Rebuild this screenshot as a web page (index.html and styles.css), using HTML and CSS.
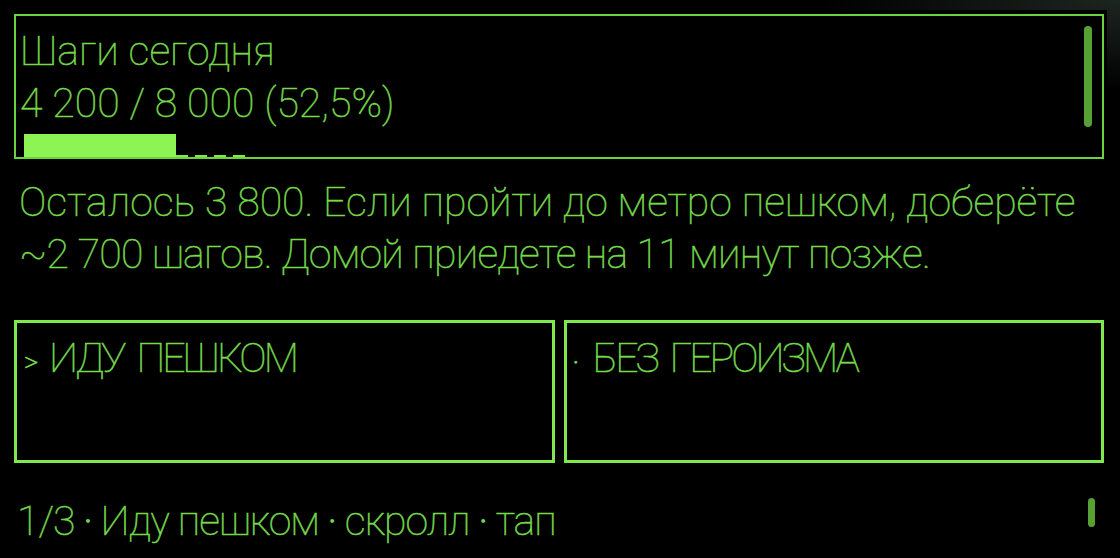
FILE: index.html
```html
<!DOCTYPE html>
<html lang="ru">
<head>
  <meta charset="UTF-8" />
  <meta name="viewport" content="width=device-width, initial-scale=1" />
  <title>Шаги</title>
  <link rel="stylesheet" href="styles.css">
</head>
<body>
  <div class="screen">
    <div class="panel">
      <div class="panel-line">Шаги сегодня</div>
      <div class="panel-line">4 200 / 8 000 (52,5%)</div>
      <div class="bar">
        <div class="bar-fill"></div>
        <div class="bar-track"></div>
      </div>
      <div class="scroll scroll-panel"></div>
    </div>

    <p class="note">Осталось 3 800. Если пройти до метро пешком, доберёте <span class="tight">~2 700 шагов. Домой приедете на 11 минут позже.</span></p>

    <div class="choices">
      <div class="choice"><span class="mark">&gt;</span>ИДУ ПЕШКОМ</div>
      <div class="choice"><span class="mark mark-dot">·</span>БЕЗ ГЕРОИЗМА</div>
    </div>

    <div class="footer">
      <span class="footer-text">1/3 <span class="sep">·</span> Иду пешком <span class="sep">·</span> скролл <span class="sep">·</span> тап</span>
      <div class="scroll scroll-footer"></div>
    </div>
  </div>
</body>
</html>
```
FILE: styles.css
```css
body {
  margin: 0;
  background: radial-gradient(ellipse 300px 90px at 100% 0, #1d2521, #000);
  color: #74d94b;
  font-family: Roboto, "Liberation Sans", sans-serif;
  font-weight: 100;
  font-size: 41px;
  line-height: 52px;
  -webkit-text-stroke: 0.5px #74d94b;
  height: 558px;
  overflow: hidden;
}
.screen {
  background: #000;
  margin: 10px 13px 0 0;
  padding: 4px 3px 0 14px;
  height: 548px;
  box-sizing: border-box;
}

/* top panel with the counter */
.panel {
  position: relative;
  height: 145px;
  box-sizing: border-box;
  border: 2px solid #6ad43c;
  padding: 9px 0 0 4px;
  overflow: hidden;
}
.panel-line {
  white-space: nowrap;
}
.bar {
  display: flex;
  margin: 5px 0 0 4px;
  height: 24px;
}
.bar-fill {
  width: 152px;
  background: #8cf553;
}
.bar-track {
  align-self: flex-end;
  width: 71px;
  height: 2px;
  margin-bottom: 1px;
  background: repeating-linear-gradient(to right, #7ee84c 0 12px, transparent 12px 19px);
}
.scroll {
  width: 8px;
  border-radius: 4px;
  background: #57a134;
}
.scroll-panel {
  position: absolute;
  top: 10px;
  right: 10px;
  height: 101px;
}

.note {
  margin: 17px 0 0;
  padding: 0 20px 0 5px;
}
.tight {
  letter-spacing: -0.7px;
}

/* two answer buttons */
.choices {
  display: grid;
  grid-template-columns: 1fr 1fr;
  gap: 9px;
  margin-top: 40px;
}
.choice {
  height: 143px;
  box-sizing: border-box;
  border: 3px solid #7ee84c;
  padding: 9px 0 0 4px;
  white-space: nowrap;
  letter-spacing: -3px;
  word-spacing: 6px;
}
.mark {
  display: inline-block;
  font-size: 28px;
  width: 25px;
  padding-left: 3px;
  letter-spacing: 0;
  -webkit-text-stroke: 0.8px #74d94b;
}
.mark-dot {
  width: 20px;
  padding-left: 2px;
  -webkit-text-stroke: 1.5px #74d94b;
}

.footer {
  display: flex;
  justify-content: space-between;
  align-items: flex-start;
  margin-top: 32px;
  padding: 0 9px 0 3px;
}
.footer-text {
  letter-spacing: -1px;
}
.sep {
  -webkit-text-stroke: 1.5px #74d94b;
}
.scroll-footer {
  width: 7px;
  height: 29px;
  margin-top: 3px;
}
```
